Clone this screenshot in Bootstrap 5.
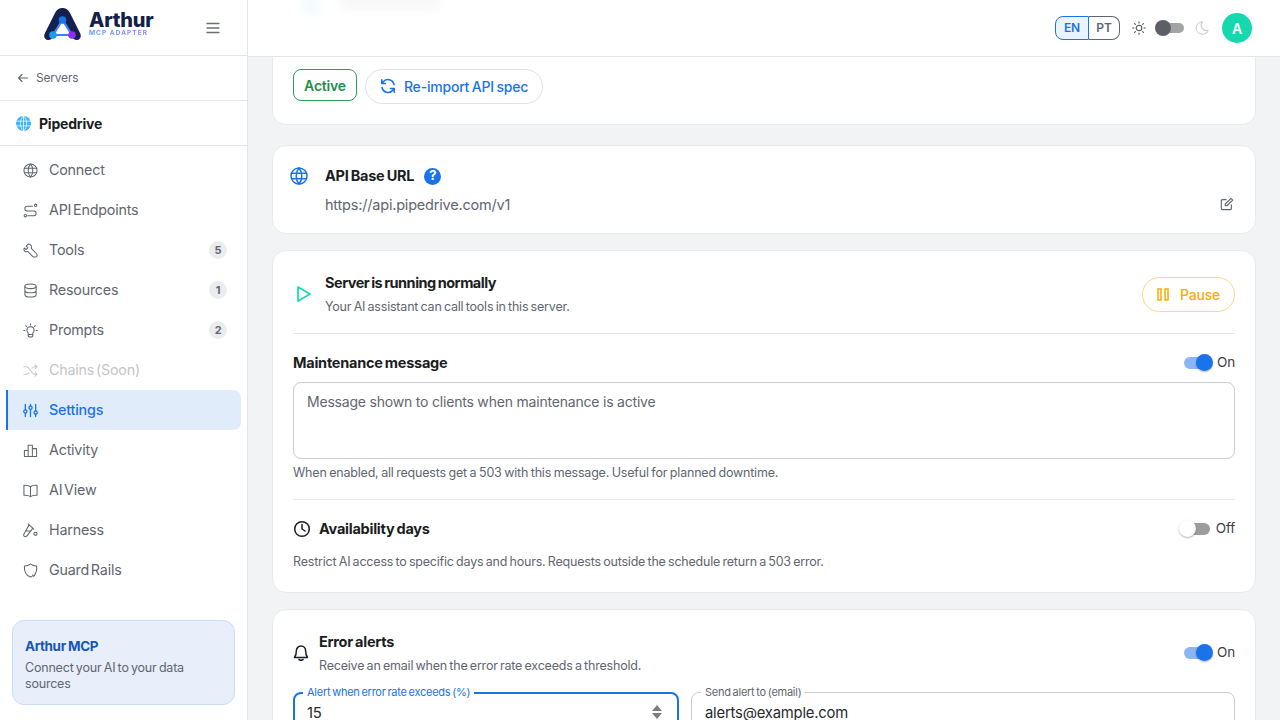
<!DOCTYPE html>
<html lang="en">
<head>
    <meta charset="UTF-8">
    <meta name="viewport" content="width=device-width, initial-scale=1.0">
    <title>Pipedrive - Arthur MCP Adapter</title>
    <link href="https://cdn.jsdelivr.net/npm/bootstrap@5.3.0/dist/css/bootstrap.min.css" rel="stylesheet">
    <style>
        html, body { height: 100%; overflow: hidden; }
        body { font-family: "Inter", "Noto Sans", sans-serif; background: #f1f3f5; color: #1a1d21; letter-spacing: -.2px; word-spacing: -1px; }
        svg { display: block; flex-shrink: 0; }
        .app-shell { height: 720px; width: 1280px; }
        .side-bar { width: 248px; height: 720px; background: #fff; border-right: 1px solid #e4e6e9; }
        .logo-row { height: 56px; border-bottom: 1px solid #e4e6e9; padding-left: 44px; padding-right: 26px; padding-bottom: 7px; }
        .logo-mark { margin-right: 7px; }
        .logo-name { font-size: 20px; line-height: 18px; font-weight: 800; color: #13204a; letter-spacing: -.2px; }
        .logo-sub { font-size: 6.5px; line-height: 7px; font-weight: 700; letter-spacing: 1.05px; word-spacing: 0; margin-top: 1px; background: linear-gradient(90deg, #4d9bf5, #9a7bf7); -webkit-background-clip: text; background-clip: text; color: transparent; }
        .menu-mark { margin-top: 7px; }
        .back-row { height: 45px; border-bottom: 1px solid #e4e6e9; padding-left: 17px; font-size: 12px; color: #5f6670; gap: 7px; }
        .server-row { height: 45px; border-bottom: 1px solid #e4e6e9; padding-left: 16px; font-size: 14px; font-weight: 700; }
        .nav-col { padding: 4px 6px 0 6px; }
        .nav-row { height: 40px; padding-left: 15px; padding-right: 14px; font-size: 14.3px; color: #5f6670; gap: 11px; border-left: 2px solid transparent; border-radius: 0 8px 8px 0; word-spacing: -2px; }
        .nav-row.is-off { color: #c3c6ca; }
        .nav-row.is-on { background: #e1ecfb; color: #1a73e8; border-left-color: #1a73e8; font-weight: 500; }
        .count-dot { width: 18px; height: 18px; border-radius: 50%; background: #ebecee; color: #5f6670; font-size: 11px; font-weight: 700; }
        .promo-box { margin: 0 12px; height: 85px; background: #e8effb; border: 1px solid #cbdcf8; border-radius: 12px; padding: 15px 12px; position: absolute; top: 620px; width: 223px; }
        .promo-title { font-size: 13.5px; line-height: 20px; font-weight: 700; color: #1557b8; letter-spacing: -.4px; word-spacing: -.5px; }
        .promo-text { font-size: 12.5px; line-height: 16px; color: #5f6670; margin-top: 4px; }
        .top-bar { height: 57px; background: #fff; border-bottom: 1px solid #e4e6e9; padding-right: 28px; position: relative; overflow: hidden; }
        .blur-spot { position: absolute; filter: blur(4px); }
        .spot-blue { left: 54px; top: -6px; width: 18px; height: 20px; background: #f3fbfe; }
        .spot-grey { left: 92px; top: -8px; width: 100px; height: 18px; background: #f8f8f8; }
        .lang-group { height: 24px; font-size: 12px; font-weight: 600; }
        .lang-btn { height: 24px; border: 1px solid #5f6670; color: #5f6670; background: #fff; }
        .lang-en { width: 34px; border-radius: 8px 0 0 8px; border-color: #1a73e8; background: #ebf3fe; color: #1a73e8; }
        .lang-pt { width: 31px; margin-left: 0; border-left: 0; border-radius: 0 8px 8px 0; }
        .sun-mark { margin: 0 9px 0 12px; }
        .moon-mark { margin: 0 13px 0 11px; }
        .theme-track { width: 29px; height: 16px; position: relative; }
        .theme-track::before { content: ""; position: absolute; left: 6px; right: 0; top: 3px; height: 10px; border-radius: 5px; background: #a1a3a7; }
        .theme-track::after { content: ""; position: absolute; left: 0; top: 0; width: 16px; height: 16px; border-radius: 50%; background: #5c6066; }
        .user-dot { width: 30px; height: 30px; border-radius: 50%; background: #14d9b0; color: #fff; font-size: 14px; font-weight: 600; }
        .page-body { padding: 0 24px 0 24px; }
        .panel-box { background: #fff; border: 1px solid #e8eaed; border-radius: 14px; padding: 20px; }
        .panel-top { border-top: 0; border-radius: 0 0 14px 14px; height: 68px; padding-top: 12px; margin-bottom: 20px; }
        .status-tag { height: 32px; width: 64px; border: 1px solid #2e9e58; border-radius: 8px; color: #1f8f49; font-size: 14px; font-weight: 600; }
        .pill-btn { height: 35px; border: 1px solid #dfe2e6; border-radius: 18px; width: 178px; color: #1a73e8; font-size: 14px; font-weight: 500; gap: 8px; background: #fff; padding-bottom: 1px; }
        .panel-url { height: 89px; margin-bottom: 16px; padding: 17px 20px 0 17px; }
        .url-col { margin-left: 17px; }
        .url-head { margin-top: 3px; gap: 10px; }
        .row-title { font-size: 14.5px; line-height: 20px; font-weight: 700; color: #1a1d21; letter-spacing: -.25px; }
        .title-tight { letter-spacing: -.5px; }
        .url-text { font-size: 14.5px; color: #5f6670; line-height: 20px; margin-top: 9px; }
        .edit-mark { margin: 7px 1px 0 0; }
        .help-dot { width: 17px; height: 17px; border-radius: 50%; background: #1a73e8; color: #fff; font-size: 13px; font-weight: 700; }
        .panel-run { height: 343px; margin-bottom: 16px; }
        .run-head { height: 62px; padding-bottom: 16px; }
        .play-mark { margin-left: 3px; }
        .text-gap-run { margin-left: 13px; }
        .title-gap { margin-bottom: 5px; }
        .sub-text { font-size: 12.5px; line-height: 18px; color: #5f6670; word-spacing: -1px; }
        .pause-btn { width: 93px; height: 35px; border: 1px solid #fdd68a; border-radius: 18px; color: #f9ab00; font-size: 14px; font-weight: 500; gap: 11px; background: #fff; }
        .thin-line { height: 1px; background: #e4e6e9; }
        .maint-head { height: 48px; padding-top: 10px; }
        .msg-area { height: 77px; border: 1px solid #c9ccd0; border-radius: 8px; padding: 9px 13px; font-size: 14px; line-height: 20px; color: #5f6670; word-spacing: 0; }
        .help-line { margin-top: 5px; word-spacing: -.7px; }
        .line-gap { margin-top: 17px; }
        .avail-head { height: 58px; }
        .avail-text { margin-top: -5px; }
        .switch-wrap { font-size: 13.5px; line-height: 18px; color: #3c4043; gap: 4px; }
        .switch-label { margin-top: -2px; }
        .sw-track { width: 32px; height: 20px; position: relative; display: block; }
        .sw-track::before { content: ""; position: absolute; left: 3px; right: 2px; top: 4px; height: 12px; border-radius: 6px; background: #8ab6f3; }
        .sw-track::after { content: ""; position: absolute; right: 0; top: 1px; width: 17px; height: 17px; border-radius: 50%; background: #1a73e8; box-shadow: 0 1px 2px rgba(0,0,0,.3); }
        .sw-track.is-off::before { background: #9c9c9c; }
        .sw-track.is-off::after { right: auto; left: -1px; background: #fff; }
        .alert-head { height: 46px; }
        .text-gap-alert { margin-left: 10px; }
        .fields-row { margin-top: 16px; gap: 12px; }
        .field-box { height: 60px; border: 1px solid #c9ccd0; border-radius: 8px; padding: 9px 13px; font-size: 14.8px; line-height: 22px; position: relative; color: #27292d; word-spacing: 0; }
        .field-box.is-focus { width: 386px; flex-shrink: 0; border: 2px solid #1a73e8; padding: 8px 12px; }
        .field-tag { position: absolute; left: 9px; top: -7px; background: #fff; padding: 0 4px; font-size: 11px; line-height: 12px; color: #5f6670; word-spacing: -1px; letter-spacing: -.25px; }
        .is-focus .field-tag { left: 8px; top: -8px; color: #1a73e8; }
        .spin-mark { position: absolute; right: 14px; top: 10px; }
    </style>
</head>
<body>
<div class="app-shell d-flex">
    <!-- Sidebar -->
    <aside class="side-bar flex-shrink-0 position-relative">
        <div class="logo-row d-flex align-items-center justify-content-between">
            <div class="d-flex align-items-center">
                <svg class="logo-mark" width="38" height="32" viewBox="0 0 38 32">
                    <path d="M4 32C1 32 -1 29 1 25L11 5C13 1 16 0 18.5 0C21 0 24 1 26 5L36 25C38 29 36 32 33 32C30 32 28 30 26 26L18.5 10L11 26C9 30 7 32 4 32Z" fill="#14204d"/>
                    <path d="M18.5 12L9 27H28Z" fill="#fff" stroke="#3b82f6" stroke-width="2.2"/>
                    <circle cx="18.5" cy="12" r="3.8" fill="#1a73e8"/><circle cx="9" cy="27" r="3.8" fill="#1e9bf0"/><circle cx="28" cy="27" r="3.8" fill="#8b2ff5"/>
                </svg>
                <div class="logo-text"><div class="logo-name">Arthur</div><div class="logo-sub">MCP ADAPTER</div></div>
            </div>
            <svg class="menu-mark" width="16" height="16" viewBox="0 0 16 16" fill="none" stroke="#6b7075" stroke-width="1.4" stroke-linecap="round"><path d="M2 3.5H14M2 8H14M2 12.5H14"/></svg>
        </div>
        <div class="back-row d-flex align-items-center">
            <svg width="12" height="12" viewBox="0 0 12 12" fill="none" stroke="#5f6670" stroke-width="1.1" stroke-linecap="round" stroke-linejoin="round"><path d="M1.5 6H10.5M5 2.5L1.5 6L5 9.5"/></svg>
            <span>Servers</span>
        </div>
        <div class="server-row d-flex align-items-center gap-2">
            <svg width="15" height="15" viewBox="0 0 16 16" fill="none" stroke="#fff" stroke-width=".8"><circle cx="8" cy="8" r="8" fill="#3db2ee" stroke="none"/><path d="M0 5.5H16M0 10.5H16M8 0C3.5 4 3.5 12 8 16C12.5 12 12.5 4 8 0ZM8 0V16"/></svg>
            <span>Pipedrive</span>
        </div>
        <nav class="nav-col">
            <div class="nav-row d-flex align-items-center">
                <svg width="15" height="15" viewBox="0 0 16 16" fill="none" stroke="#5f6670" stroke-width="1.1"><circle cx="8" cy="8" r="7"/><path d="M1 5.7H15M1 10.3H15M8 1C4.7 5 4.7 11 8 15C11.3 11 11.3 5 8 1Z"/></svg>
                <span>Connect</span>
            </div>
            <div class="nav-row d-flex align-items-center">
                <svg width="15" height="15" viewBox="0 0 16 16" fill="none" stroke="#5f6670" stroke-width="1.1" stroke-linecap="round"><circle cx="2.5" cy="13.5" r="1.3"/><circle cx="13.5" cy="2.5" r="1.3"/><path d="M5 13.5H11.5A2.4 2.4 0 0 0 11.5 8.5H4.5A2.4 2.4 0 0 1 4.5 3.5H10"/></svg>
                <span>API Endpoints</span>
            </div>
            <div class="nav-row d-flex align-items-center">
                <svg width="15" height="15" viewBox="0 0 16 16" fill="none" stroke="#5f6670" stroke-width="1.1" stroke-linejoin="round"><path d="M5.5 1.2L3.4 3.3L5.2 5.1L3.2 7.1L1.4 5.3C.6 7 1.2 8.4 2.2 9C3.2 9.6 4.2 9.5 5 9L10.5 14.5C11.2 15.2 13.5 15.2 14.5 14.5C15.2 13.6 15 12 14.3 11.2L8.8 5.7C9.4 4.5 9 3 8 2C7.2 1.2 6.4 1 5.5 1.2Z"/></svg>
                <span>Tools</span>
                <span class="count-dot d-flex align-items-center justify-content-center ms-auto">5</span>
            </div>
            <div class="nav-row d-flex align-items-center">
                <svg width="15" height="15" viewBox="0 0 16 16" fill="none" stroke="#5f6670" stroke-width="1.1"><ellipse cx="8" cy="3.5" rx="6" ry="2.5"/><path d="M2 3.5V12.5C2 13.9 4.7 15 8 15C11.3 15 14 13.9 14 12.5V3.5M2 8C2 9.4 4.7 10.5 8 10.5C11.3 10.5 14 9.4 14 8"/></svg>
                <span>Resources</span>
                <span class="count-dot d-flex align-items-center justify-content-center ms-auto">1</span>
            </div>
            <div class="nav-row d-flex align-items-center">
                <svg width="15" height="15" viewBox="0 0 16 16" fill="none" stroke="#5f6670" stroke-width="1.1" stroke-linecap="round"><path d="M5.5 10.5C4.5 9.7 4.2 8.7 4.2 7.8A3.8 3.8 0 0 1 11.8 7.8C11.8 8.7 11.5 9.7 10.5 10.5V13C10.5 14 9.5 15 8 15C6.5 15 5.5 14 5.5 13ZM5.5 12.3H10.5M.8 8H2M14 8H15.2M8 .8V2M2.9 2.9L3.7 3.7M13.1 2.9L12.3 3.7"/></svg>
                <span>Prompts</span>
                <span class="count-dot d-flex align-items-center justify-content-center ms-auto">2</span>
            </div>
            <div class="nav-row is-off d-flex align-items-center">
                <svg width="15" height="15" viewBox="0 0 16 16" fill="none" stroke="#c3c6ca" stroke-width="1.1" stroke-linecap="round" stroke-linejoin="round"><path d="M1 4H4C7 4 9 12 12 12H15M1 12H4C5 12 5.8 11.2 6.5 10.2M9.5 5.8C10.2 4.8 11 4 12 4H15M13 2L15 4L13 6M13 10L15 12L13 14"/></svg>
                <span>Chains (Soon)</span>
            </div>
            <div class="nav-row is-on d-flex align-items-center">
                <svg width="15" height="15" viewBox="0 0 16 16" fill="none" stroke="#1a73e8" stroke-width="1.4" stroke-linecap="round"><path d="M2.5 1.5V7M2.5 11V14.5M8 1.5V3M8 7V14.5M13.5 1.5V8M13.5 12V14.5"/><circle cx="2.5" cy="9" r="1.7"/><circle cx="8" cy="5" r="1.7"/><circle cx="13.5" cy="10" r="1.7"/></svg>
                <span>Settings</span>
            </div>
            <div class="nav-row d-flex align-items-center">
                <svg width="15" height="15" viewBox="0 0 16 16" fill="none" stroke="#5f6670" stroke-width="1.1" stroke-linejoin="round"><path d="M1 14.5H15M1.5 14.5V8H5.5V14.5M5.5 14.5V2.5H10V14.5M10 14.5V6H14.5V14.5"/></svg>
                <span>Activity</span>
            </div>
            <div class="nav-row d-flex align-items-center">
                <svg width="15" height="15" viewBox="0 0 16 16" fill="none" stroke="#5f6670" stroke-width="1.1" stroke-linejoin="round"><path d="M8 4C6.5 2.7 4 2.3 1 2.5V13C4 12.8 6.5 13.2 8 14.5C9.5 13.2 12 12.8 15 13V2.5C12 2.3 9.5 2.7 8 4ZM8 4V14.5"/></svg>
                <span>AI View</span>
            </div>
            <div class="nav-row d-flex align-items-center">
                <svg width="15" height="15" viewBox="0 0 16 16" fill="none" stroke="#5f6670" stroke-width="1.1" stroke-linejoin="round" stroke-linecap="round"><path d="M6.5 2L10.5 5.5L4.5 13.5C3.5 14.8 1.9 14.8 1.2 14C.5 13.2 .6 12 1.5 11ZM5.5 1L11.5 6.5M3.5 8.5H8"/><circle cx="13.3" cy="11.5" r="1.7"/></svg>
                <span>Harness</span>
            </div>
            <div class="nav-row d-flex align-items-center">
                <svg width="15" height="15" viewBox="0 0 16 16" fill="none" stroke="#5f6670" stroke-width="1.1" stroke-linejoin="round" stroke-linecap="round"><path d="M8 1C10 2.7 12.2 3.3 14.5 3.2C15 7.5 14.3 10 12.5 12.5M8 15C4.5 13.8 1 11 1.5 3.2C3.8 3.3 6 2.7 8 1M8 15L9.5 14.4M10 12.8L11.3 14.2L13 12.5"/></svg>
                <span>Guard Rails</span>
            </div>
        </nav>
        <div class="promo-box">
            <div class="promo-title">Arthur MCP</div>
            <div class="promo-text">Connect your AI to your data sources</div>
        </div>
    </aside>

    <div class="flex-grow-1">
        <!-- Top bar -->
        <header class="top-bar d-flex align-items-center justify-content-end">
            <span class="blur-spot spot-blue"></span>
            <span class="blur-spot spot-grey"></span>
            <div class="lang-group d-flex align-items-center">
                <div class="lang-btn lang-en d-flex align-items-center justify-content-center">EN</div>
                <div class="lang-btn lang-pt d-flex align-items-center justify-content-center">PT</div>
            </div>
            <svg class="sun-mark" width="14" height="14" viewBox="0 0 16 16" fill="none" stroke="#4b4f55" stroke-width="1.2" stroke-linecap="round"><circle cx="8" cy="8" r="3.2"/><path d="M8 .8V2.2M8 13.8V15.2M.8 8H2.2M13.8 8H15.2M2.9 2.9L3.9 3.9M12.1 12.1L13.1 13.1M2.9 13.1L3.9 12.1M12.1 3.9L13.1 2.9"/></svg>
            <div class="theme-track"></div>
            <svg class="moon-mark" width="14" height="14" viewBox="0 0 16 16" fill="none" stroke="#c9ccd0" stroke-width="1.2" stroke-linejoin="round"><path d="M8.5 1A7 7 0 1 0 15 10.5A6 6 0 0 1 8.5 1Z"/></svg>
            <div class="user-dot d-flex align-items-center justify-content-center">A</div>
        </header>

        <main class="page-body">
            <section class="panel-box panel-top d-flex align-items-start gap-2">
                <div class="status-tag d-flex align-items-center justify-content-center">Active</div>
                <div class="pill-btn d-flex align-items-center justify-content-center">
                    <svg width="16" height="16" viewBox="0 0 16 16" fill="none" stroke="#1a73e8" stroke-width="1.6" stroke-linecap="round" stroke-linejoin="round"><path d="M14 6.5A6.2 6.2 0 0 0 3 4L1.8 5.5M1.8 1.8V5.5H5.5M2 9.5A6.2 6.2 0 0 0 13 12L14.2 10.5M14.2 14.2V10.5H10.5"/></svg>
                    <span>Re-import API spec</span>
                </div>
            </section>

            <section class="panel-box panel-url d-flex">
                <svg class="mt-1" width="18" height="18" viewBox="0 0 18 18" fill="none" stroke="#1a73e8" stroke-width="1.5"><circle cx="9" cy="9" r="8"/><path d="M1 6.3H17M1 11.7H17M9 1C5.2 5.5 5.2 12.5 9 17C12.8 12.5 12.8 5.5 9 1Z"/></svg>
                <div class="url-col flex-grow-1">
                    <div class="url-head d-flex align-items-center">
                        <span class="row-title">API Base URL</span>
                        <span class="help-dot d-flex align-items-center justify-content-center">?</span>
                    </div>
                    <div class="d-flex justify-content-between align-items-center">
                        <div class="url-text">https://api.pipedrive.com/v1</div>
                        <svg class="edit-mark" width="14" height="14" viewBox="0 0 16 16" fill="none" stroke="#5f6670" stroke-width="1.3" stroke-linecap="round" stroke-linejoin="round"><path d="M7 3H3A1.5 1.5 0 0 0 1.5 4.5V13A1.5 1.5 0 0 0 3 14.5H11.5A1.5 1.5 0 0 0 13 13V9"/><path d="M6 10V8L12.5 1.5L14.5 3.5L8 10Z"/></svg>
                    </div>
                </div>
            </section>

            <section class="panel-box panel-run">
                <div class="run-head d-flex align-items-center">
                    <svg class="play-mark" width="16" height="18" viewBox="0 0 16 18" fill="none" stroke="#14d9b0" stroke-width="1.7" stroke-linejoin="round"><path d="M2 2L14 9L2 16Z"/></svg>
                    <div class="text-gap-run flex-grow-1">
                        <div class="row-title title-tight title-gap">Server is running normally</div>
                        <div class="sub-text">Your AI assistant can call tools in this server.</div>
                    </div>
                    <div class="pause-btn d-flex align-items-center justify-content-center">
                        <svg width="12" height="13" viewBox="0 0 12 13" fill="none" stroke="#f9ab00" stroke-width="1.5"><rect x="1" y="1" width="3" height="11"/><rect x="8" y="1" width="3" height="11"/></svg>
                        <span>Pause</span>
                    </div>
                </div>
                <div class="thin-line"></div>
                <div class="maint-head d-flex justify-content-between align-items-center">
                    <span class="row-title">Maintenance message</span>
                    <div class="switch-wrap d-flex align-items-center"><span class="sw-track"></span><span class="switch-label">On</span></div>
                </div>
                <div class="msg-area">Message shown to clients when maintenance is active</div>
                <div class="sub-text help-line">When enabled, all requests get a 503 with this message. Useful for planned downtime.</div>
                <div class="thin-line line-gap"></div>
                <div class="avail-head d-flex justify-content-between align-items-center">
                    <div class="d-flex align-items-center gap-2">
                        <svg width="18" height="18" viewBox="0 0 18 18" fill="none" stroke="#1a1d21" stroke-width="1.5" stroke-linecap="round" stroke-linejoin="round"><circle cx="9" cy="9" r="7.3"/><path d="M9 4.5V9L12 11"/></svg>
                        <span class="row-title">Availability days</span>
                    </div>
                    <div class="switch-wrap d-flex align-items-center"><span class="sw-track is-off"></span><span class="switch-label">Off</span></div>
                </div>
                <div class="sub-text avail-text">Restrict AI access to specific days and hours. Requests outside the schedule return a 503 error.</div>
            </section>

            <section class="panel-box">
                <div class="alert-head d-flex align-items-center">
                    <svg width="16" height="18" viewBox="0 0 16 18" fill="none" stroke="#1a1d21" stroke-width="1.5" stroke-linecap="round" stroke-linejoin="round"><path d="M8 2A4.6 4.6 0 0 0 3.4 6.6C3.4 10 2.6 12 1.5 13.5H14.5C13.4 12 12.6 10 12.6 6.6A4.6 4.6 0 0 0 8 2ZM6 15.5C6.6 16.5 9.4 16.5 10 15.5"/></svg>
                    <div class="text-gap-alert flex-grow-1">
                        <div class="row-title title-gap">Error alerts</div>
                        <div class="sub-text">Receive an email when the error rate exceeds a threshold.</div>
                    </div>
                    <div class="switch-wrap d-flex align-items-center"><span class="sw-track"></span><span class="switch-label">On</span></div>
                </div>
                <div class="fields-row d-flex">
                    <div class="field-box is-focus">
                        <span class="field-tag">Alert when error rate exceeds (%)</span>
                        <span>15</span>
                        <svg class="spin-mark" width="12" height="16" viewBox="0 0 12 16" fill="#7d7d7d"><path d="M6 1L11 7H1ZM6 15L1 9H11Z"/></svg>
                    </div>
                    <div class="field-box flex-grow-1">
                        <span class="field-tag">Send alert to (email)</span>
                        <span>alerts@example.com</span>
                    </div>
                </div>
            </section>
        </main>
    </div>
</div>
<script src="https://cdn.jsdelivr.net/npm/bootstrap@5.3.0/dist/js/bootstrap.bundle.min.js"></script>
</body>
</html>
